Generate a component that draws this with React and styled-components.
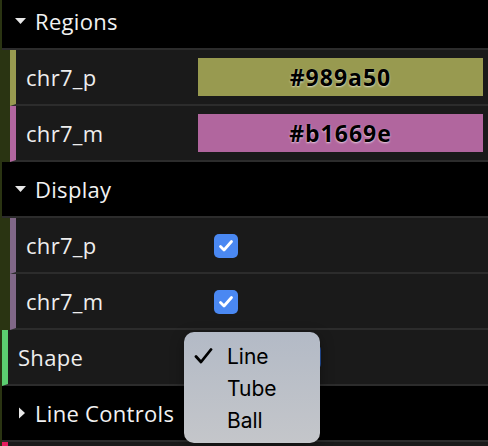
import React from "react";
import styled, { createGlobalStyle } from "styled-components";

const GlobalStyle = createGlobalStyle`
  html, body {
    margin: 0;
    padding: 0;
    background: #2a3412;
    overflow: hidden;
  }
  body {
    font-family: "Open Sans", "DejaVu Sans", sans-serif;
    -webkit-font-smoothing: antialiased;
  }
`;

// the whole gui panel, scrolled a little so the first title is cut
const Panel = styled.ul`
  list-style: none;
  margin: -6px 0 0 2px;
  padding: 0;
  width: 486px;
`;

const Folder = styled.li`
  margin: 0;
  padding: 0;
`;

const Title = styled.div`
  display: flex;
  align-items: center;
  gap: 8px;
  height: 54px;
  padding-left: 12px;
  background: #000;
  border-bottom: 2px solid #2c2c2c;
  color: #f2f2f2;
  font-size: 22px;
  letter-spacing: 0.3px;
  cursor: pointer;
`;

const Arrow = styled.svg`
  width: 13px;
  height: 12px;
  flex-shrink: 0;
  fill: #e8e8e8;
`;

const Children = styled.ul`
  list-style: none;
  margin: 0;
  padding: 0 0 0 8px;
`;

const Row = styled.li`
  position: relative;
  display: flex;
  align-items: center;
  height: 54px;
  padding: 0 5px 0 10px;
  background: #1a1a1a;
  border-left: 6px solid ${(p) => p.$accent};
  border-bottom: 2px solid #2c2c2c;
`;

const Name = styled.span`
  width: ${(p) => p.$width}px;
  flex-shrink: 0;
  color: #eee;
  font-size: 22px;
  letter-spacing: 0.3px;
  white-space: nowrap;
`;

const Swatch = styled.div`
  flex: 1;
  height: 38px;
  display: flex;
  align-items: center;
  justify-content: center;
  background: ${(p) => p.$color};
  color: #000;
  font-size: 23px;
  font-weight: 700;
  letter-spacing: 1px;
  text-shadow: 0 1px 2px rgba(255, 255, 255, 0.7);
`;

const Checkbox = styled.div`
  width: 24px;
  height: 24px;
  margin: 2px 0 0 16px;
  border-radius: 5px;
  background: #4a88f2;
  display: flex;
  align-items: center;
  justify-content: center;
`;

const SelectBox = styled.div`
  width: 123px;
  height: 26px;
  border-radius: 6px;
  background: #234f9f;
`;

const Menu = styled.ul`
  position: absolute;
  left: 176px;
  top: 2px;
  z-index: 10;
  width: 136px;
  margin: 0;
  padding: 8px 0 7px;
  list-style: none;
  box-sizing: border-box;
  border-radius: 10px;
  background: linear-gradient(#b3bac6, #c4c6ca);
  box-shadow: 0 4px 14px rgba(0, 0, 0, 0.35);
`;

const MenuItem = styled.li`
  display: grid;
  grid-template-columns: 33px 1fr;
  align-items: center;
  height: 32px;
  padding-left: 10px;
  color: #000;
  font-family: Inter, "Open Sans", sans-serif;
  font-size: 21px;
`;

const DownArrow = () => (
  <Arrow viewBox="0 0 13 12">
    <polygon points="1,3 12,3 6.5,9" />
  </Arrow>
);

const RightArrow = () => (
  <Arrow viewBox="0 0 13 12">
    <polygon points="5,0.5 11,6 5,11.5" />
  </Arrow>
);

const Tick = () => (
  <svg width="16" height="14" viewBox="0 0 16 14">
    <path d="M2.5 7.5 L6 11 L13.5 2.5" fill="none" stroke="#fff" strokeWidth="2.8" strokeLinecap="round" strokeLinejoin="round" />
  </svg>
);

const MenuCheck = () => (
  <svg width="19" height="16" viewBox="0 0 19 16">
    <path d="M2 8.5 L7 14 L17 1.5" fill="none" stroke="#000" strokeWidth="2.8" strokeLinecap="round" strokeLinejoin="round" />
  </svg>
);

const regions = [
  { name: "chr7_p", color: "#989a50" },
  { name: "chr7_m", color: "#b1669e" },
];

const shapes = ["Line", "Tube", "Ball"];

export default function App() {
  return (
    <>
      <GlobalStyle />
      <Panel>
        <Folder>
          <Title>
            <DownArrow />
            Regions
          </Title>
          <Children>
            {regions.map((r) => (
              <Row key={r.name} $accent={r.color}>
                <Name $width={172}>{r.name}</Name>
                <Swatch $color={r.color}>{r.color}</Swatch>
              </Row>
            ))}
          </Children>
        </Folder>
        <Folder>
          <Title>
            <DownArrow />
            Display
          </Title>
          <Children>
            {regions.map((r) => (
              <Row key={r.name} $accent="#806787">
                <Name $width={172}>{r.name}</Name>
                <Checkbox>
                  <Tick />
                </Checkbox>
              </Row>
            ))}
          </Children>
        </Folder>
        <Row $accent="#5bcd70">
          <Name $width={180}>Shape</Name>
          <SelectBox />
          <Menu>
            {shapes.map((s, i) => (
              <MenuItem key={s}>
                <span>{i === 0 && <MenuCheck />}</span>
                {s}
              </MenuItem>
            ))}
          </Menu>
        </Row>
        <Folder>
          <Title>
            <RightArrow />
            Line Controls
          </Title>
        </Folder>
        <Row $accent="#e61d5f">
          <Name $width={180} />
        </Row>
      </Panel>
    </>
  );
}
